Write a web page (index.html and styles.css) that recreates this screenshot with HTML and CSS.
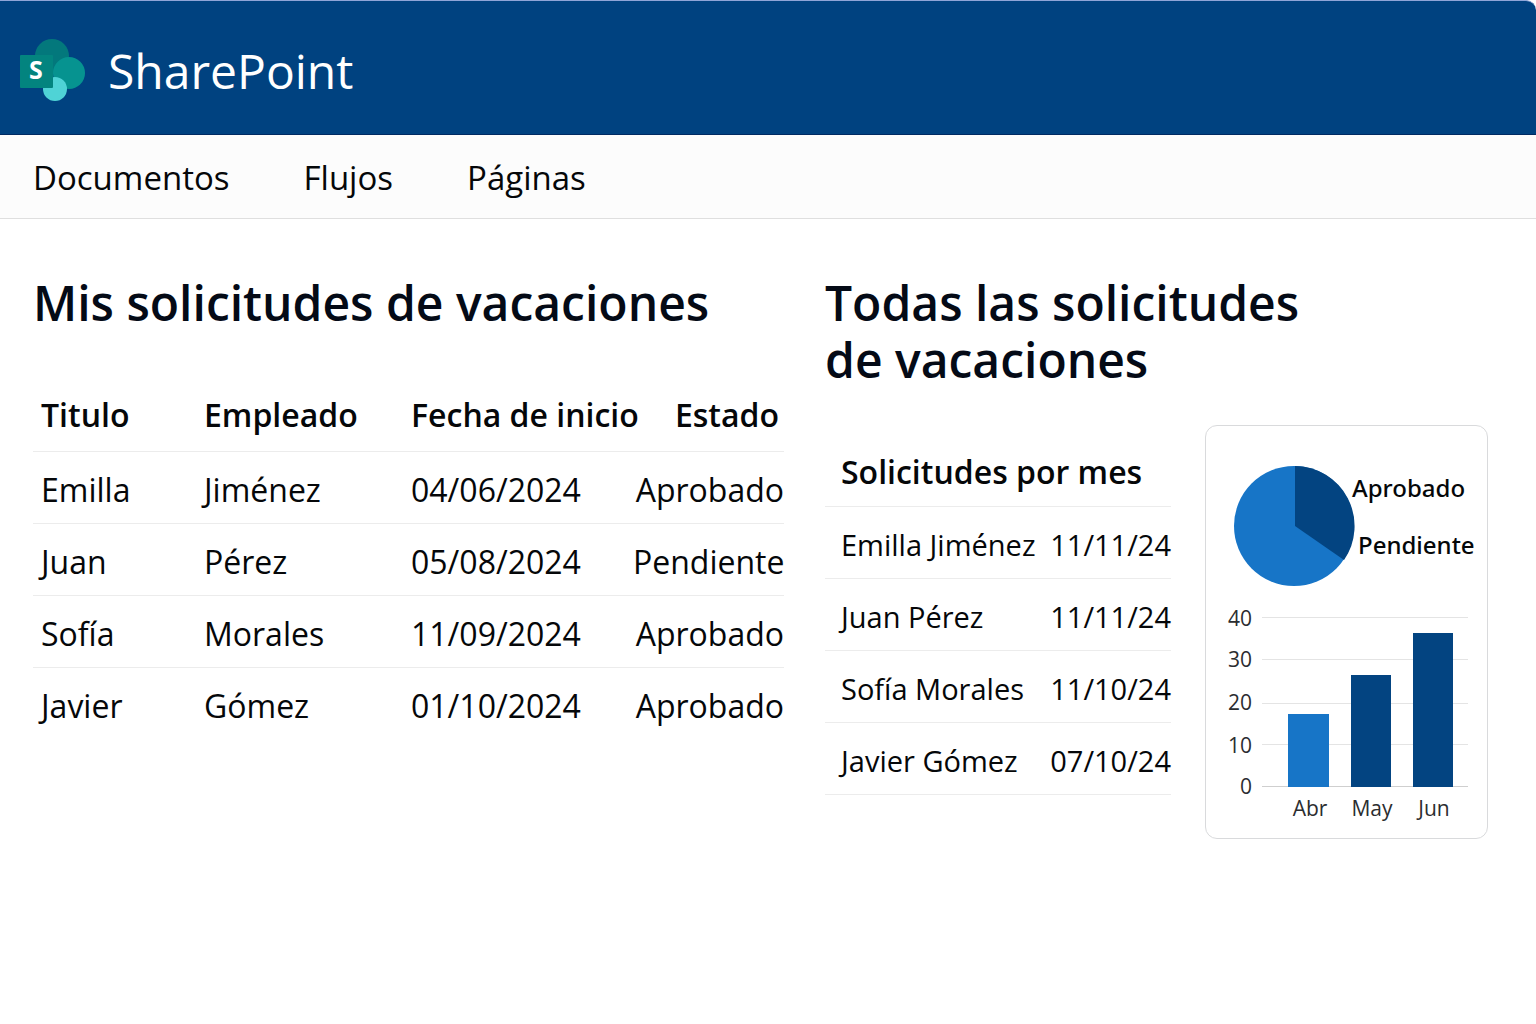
FILE: index.html
```html
<!DOCTYPE html>
<html lang="es">
<head>
    <meta charset="UTF-8">
    <meta name="viewport" content="width=device-width, initial-scale=1.0">
    <title>SharePoint - Solicitudes de vacaciones</title>
    <link rel="stylesheet" href="styles.css">
</head>
<body>
    <header class="top-bar">
        <svg class="logo" viewBox="0 0 66 64" aria-hidden="true">
            <circle cx="32" cy="17" r="17" fill="#03787c"/>
            <circle cx="49" cy="34" r="16" fill="#069390"/>
            <circle cx="35" cy="50" r="12" fill="#4fd3d6"/>
            <rect x="0" y="16" width="33" height="33" rx="1" fill="#03847f"/>
            <text class="logo-letter" x="16" y="40" text-anchor="middle">S</text>
        </svg>
        <span class="brand">SharePoint</span>
    </header>

    <nav class="nav">
        <a href="#">Documentos</a>
        <a href="#">Flujos</a>
        <a href="#">Páginas</a>
    </nav>

    <main class="content">
        <section class="mine">
            <h1>Mis solicitudes de vacaciones</h1>
            <table class="requests">
                <colgroup>
                    <col class="col-title">
                    <col class="col-employee">
                    <col class="col-date">
                    <col>
                </colgroup>
                <thead>
                    <tr><th>Titulo</th><th>Empleado</th><th>Fecha de inicio</th><th>Estado</th></tr>
                </thead>
                <tbody>
                    <tr><td>Emilla</td><td>Jiménez</td><td>04/06/2024</td><td>Aprobado</td></tr>
                    <tr><td>Juan</td><td>Pérez</td><td>05/08/2024</td><td>Pendiente</td></tr>
                    <tr><td>Sofía</td><td>Morales</td><td>11/09/2024</td><td>Aprobado</td></tr>
                    <tr><td>Javier</td><td>Gómez</td><td>01/10/2024</td><td>Aprobado</td></tr>
                </tbody>
            </table>
        </section>

        <section class="all">
            <h1>Todas las solicitudes<br>de vacaciones</h1>
            <div class="summary">
                <table class="monthly">
                    <colgroup>
                        <col>
                        <col class="col-day">
                    </colgroup>
                    <thead>
                        <tr><th colspan="2">Solicitudes por mes</th></tr>
                    </thead>
                    <tbody>
                        <tr><td>Emilla Jiménez</td><td>11/11/24</td></tr>
                        <tr><td>Juan Pérez</td><td>11/11/24</td></tr>
                        <tr><td>Sofía Morales</td><td>11/10/24</td></tr>
                        <tr><td>Javier Gómez</td><td>07/10/24</td></tr>
                    </tbody>
                </table>

                <div class="card">
                    <svg class="charts" viewBox="0 0 281 412" role="img" aria-label="Solicitudes por estado y por mes">
                        <!-- estado -->
                        <circle cx="88" cy="100" r="60" fill="#1775c7"/>
                        <path d="M89 100V40A60 60 0 0 1 138 134Z" fill="#034481"/>
                        <g class="legend">
                            <text x="146" y="71">Aprobado</text>
                            <text x="152" y="128">Pendiente</text>
                        </g>
                        <!-- meses -->
                        <g class="grid">
                            <rect x="56" y="191" width="206" height="1"/>
                            <rect x="56" y="233" width="206" height="1"/>
                            <rect x="56" y="277" width="206" height="1"/>
                            <rect x="56" y="318" width="206" height="1"/>
                            <rect class="axis" x="56" y="360" width="206" height="1"/>
                        </g>
                        <g class="ticks" text-anchor="end">
                            <text x="46" y="200">40</text>
                            <text x="46" y="241">30</text>
                            <text x="46" y="284">20</text>
                            <text x="46" y="327">10</text>
                            <text x="46" y="368">0</text>
                        </g>
                        <rect x="82" y="288" width="41" height="73" fill="#1775c7"/>
                        <rect x="145" y="249" width="40" height="112" fill="#034481"/>
                        <rect x="207" y="207" width="40" height="154" fill="#034481"/>
                        <g class="ticks" text-anchor="middle">
                            <text x="104" y="390">Abr</text>
                            <text x="166" y="390">May</text>
                            <text x="228" y="390">Jun</text>
                        </g>
                    </svg>
                </div>
            </div>
        </section>
    </main>
</body>
</html>
```
FILE: styles.css
```css
* {
    box-sizing: border-box;
}
body {
    margin: 0;
    background-color: #fff;
    color: #050709;
    font-family: 'Segoe UI', 'Open Sans', 'Noto Sans', sans-serif;
}
.top-bar {
    display: flex;
    align-items: center;
    gap: 22px;
    height: 135px;
    padding: 6px 20px 0;
    background-color: #004280;
    border-top: 1px solid #8fa5d8;
    border-bottom: 1px solid #002a62;
    border-top-right-radius: 10px;
    color: #fff;
}
.logo {
    width: 66px;
    height: 64px;
}
.logo-letter {
    fill: #fff;
    font-size: 25px;
    font-weight: 700;
}
.brand {
    font-size: 48px;
    line-height: 64px;
}
.nav {
    display: flex;
    gap: 74px;
    padding: 20px 33px 18px;
    background-color: #fcfcfc;
    border-bottom: 1px solid #dfdfdf;
    font-size: 33px;
    line-height: 45px;
}
.nav a {
    color: #050709;
    text-decoration: none;
}
.content {
    display: flex;
    gap: 41px;
    padding: 55px 48px 0 33px;
}
.mine {
    flex: 751;
}
.all {
    flex: 663;
}
h1 {
    margin: 0;
    color: #040a16;
    font-size: 48px;
    font-weight: 600;
    line-height: 57px;
    white-space: nowrap;
}
table {
    width: 100%;
    border-collapse: collapse;
    table-layout: fixed;
    white-space: nowrap;
}
th,
td {
    padding: 0;
    border-bottom: 1px solid #ececec;
    font-weight: 400;
    text-align: left;
}
th {
    font-size: 32px;
    font-weight: 600;
}
.requests {
    margin-top: 48px;
    font-size: 32px;
}
.requests th,
.requests td {
    height: 72px;
    padding-left: 8px;
}
.requests td {
    padding-top: 4px;
}
.requests tr > :last-child {
    padding-left: 0;
    text-align: right;
}
.requests tbody tr:last-child td {
    border-bottom: 0;
}
.requests th:last-child {
    padding-right: 5px;
}
.col-title {
    width: 163px;
}
.col-employee {
    width: 207px;
}
.col-date {
    width: 230px;
}
.summary {
    display: flex;
    gap: 34px;
    margin-top: 37px;
}
.monthly {
    flex: 1;
    align-self: flex-start;
    margin-top: 9px;
    font-size: 29px;
}
.monthly th,
.monthly td {
    height: 72px;
    padding: 4px 0 0 16px;
}
.monthly td:last-child {
    padding-left: 0;
    text-align: right;
}
.col-day {
    width: 124px;
}
.card {
    flex: 0 0 283px;
    border: 1px solid #d9dadc;
    border-radius: 12px;
}
.charts {
    display: block;
    width: 100%;
}
.legend {
    fill: #050709;
    font-family: 'Segoe UI', 'Noto Sans', sans-serif;
    font-size: 24px;
    font-weight: 500;
}
.ticks {
    fill: #2b2d30;
    font-size: 21px;
}
.grid {
    fill: #e4e4e4;
}
.axis {
    fill: #cfcfcf;
}
```
